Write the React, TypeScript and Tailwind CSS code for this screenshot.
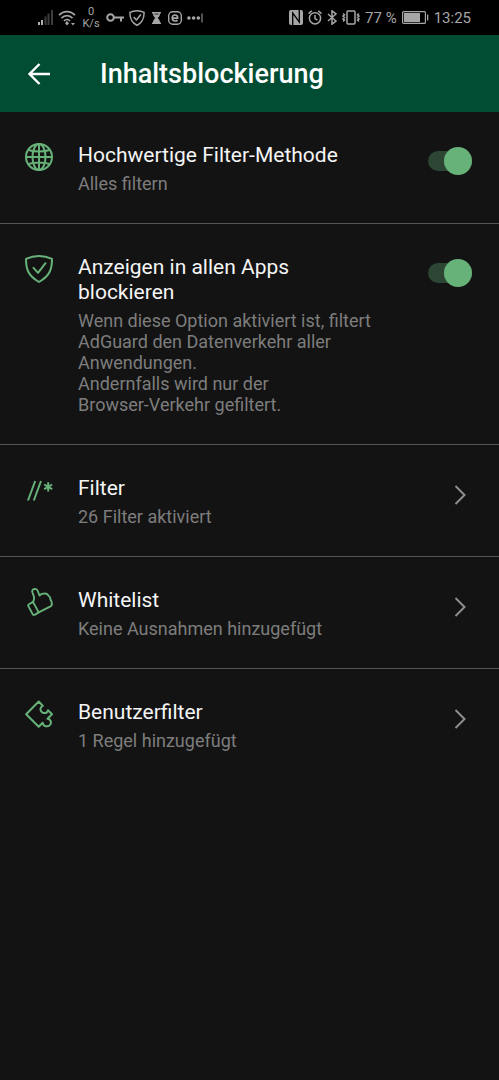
import React, { useState } from 'react';

const GlobeIcon = () => (
  <svg viewBox="0 0 28 28" className="h-7 w-7" fill="none" stroke="currentColor" strokeWidth="2">
    <circle cx="14" cy="14" r="13" />
    <ellipse cx="14" cy="14" rx="6.5" ry="13" />
    <path d="M14 1v26M1 14h26M3.500 7c5.500 2 15.500 2 21 0M3.500 21c5.500-2 15.500-2 21 0" />
  </svg>
);

const ShieldIcon = () => (
  <svg viewBox="0 0 28 28" className="h-7 w-7" fill="none" stroke="currentColor" strokeWidth="2" strokeLinejoin="round" strokeLinecap="round">
    <path d="M14 1C9.500 1 5 2 1 3.800c0 9.500 1.500 16.700 13 23.200 11.500-6.500 13-13.700 13-23.200C23 2 18.500 1 14 1z" />
    <path d="M8.500 12.800l4.500 5 7.500-9.600" />
  </svg>
);

const FilterIcon = () => (
  <svg viewBox="0 0 28 28" className="h-7 w-7" fill="none" stroke="currentColor" strokeWidth="2">
    <path d="M3 24.500L10.200 5M8.800 24.500L16 5" />
    <path d="M23.200 6.200v9.200M19.200 8.500l8 4.600M27.200 8.500l-8 4.600" />
  </svg>
);

const ThumbIcon = () => (
  <svg viewBox="0 0 28 28" className="h-7 w-7" fill="none" stroke="currentColor" strokeWidth="1.900" strokeLinejoin="round" strokeLinecap="round">
    <path d="M4 16.200l4-2.300 5.700 10.500-3.600 2.200c-1 .6-2 .3-2.600-.7L3.500 18.400c-.5-.9-.3-1.700.5-2.200z" />
    <path d="M8 13.900c1.500-2.300 1.300-4.500.4-6.700L7.400 4.300C6.800 2.200 8 1.200 9.500 1c1.600-.2 2.800.5 3.300 2l1.700 4.500c1.200-1.300 2.500-2 4-1.800 2.700-.7 4.200.2 5 2 1.600 1 2.100 2.300 1.900 3.700 1.400 2 1.600 3.500 1.500 5.200-.1.800-.6 1.300-1.400 1.800L13.700 24.400" />
  </svg>
);

const PuzzleIcon = () => (
  <svg viewBox="0 0 28 28" className="h-7 w-7" fill="none" stroke="currentColor" strokeWidth="2" strokeLinejoin="round">
    <path d="M13.700 1.500L1.200 14.200l12.500 12.500 4-4c.2 2.500 2.500 4 4.800 3.600 2.500-.4 4-2.900 3.200-5.200-.5-1.400-1.700-2.300-3.200-2.400l4.500-4.500-4-4c-.6 2-2.300 3.200-4.300 2.800-2.300-.4-3.700-2.700-3-4.900.3-1.100 1-1.800 2-2.300z" />
  </svg>
);

const SignalIcon = () => (
  <svg viewBox="0 0 15 15" className="h-[15px] w-[15px]">
    <path d="M0 12h2v3H0zM3 10h2v5H3z" fill="#b0b0b0" />
    <path d="M6.500 6.500h2V15h-2zM9.500 3.500h2V15h-2zM13 0h2v15h-2z" fill="#3c3c3c" />
  </svg>
);

const WifiIcon = () => (
  <svg viewBox="0 0 18 16" className="h-4 w-[18px]" fill="none" stroke="currentColor" strokeWidth="1.700">
    <path d="M1 5.200C5.600.3 12.400.3 17 5.200M3.500 8.200c3.200-3.400 7.800-3.400 11 0M6 11c1.800-2 4.200-2 6 0" />
    <path d="M9 11l2 2.200-2 2.200-2-2.200z" fill="currentColor" stroke="none" />
    <path d="M13 13h4l-2 2.500z" fill="currentColor" stroke="none" />
  </svg>
);

const KeyIcon = () => (
  <svg viewBox="0 0 18 16" className="h-4 w-[18px]" fill="none" stroke="currentColor" strokeWidth="2">
    <circle cx="4.500" cy="7.500" r="3.300" />
    <path d="M8 7.500h10M15 7.500v4" />
  </svg>
);

const SmallShieldIcon = () => (
  <svg viewBox="0 0 16 16" className="h-4 w-4" fill="none" stroke="currentColor" strokeWidth="1.500" strokeLinejoin="round">
    <path d="M8 .8C5.500.8 3 1.400.9 2.400.9 8 2 12 8 15.400 14 12 15.100 8 15.100 2.400 13 1.400 10.500.8 8 .8z" />
    <path d="M4.700 7l2.700 3 4.500-5.500" />
  </svg>
);

const HourglassIcon = () => (
  <svg viewBox="0 0 13 12" className="h-3 w-[13px]" fill="currentColor">
    <path d="M2 0h9v1.500h-1c0 2-1 3.500-2.500 4.500C9 7 10 8.500 10 10.500h1V12H2v-1.500h1c0-2 1-3.500 2.500-4.500C4 5 3 3.500 3 1.500H2z" />
    <path d="M4.500 2h4" stroke="#000" fill="none" strokeWidth=".8" />
  </svg>
);

const BrowserIcon = () => (
  <svg viewBox="0 0 14 14" className="h-3.5 w-3.5" fill="none" stroke="currentColor">
    <rect x=".7" y=".7" width="12.600" height="12.600" rx="4" strokeWidth="1.400" />
    <path d="M4.300 7.200h5.400C9.700 5.300 8.700 4 7 4S4.200 5.400 4.200 7.100 5.400 10 7.100 10c1 0 1.800-.3 2.300-.9" strokeWidth="1.700" />
  </svg>
);

const DotsIcon = () => (
  <svg viewBox="0 0 16 12" className="h-3 w-4" fill="currentColor">
    <circle cx="1.900" cy="6" r="1.800" />
    <circle cx="6.600" cy="6" r="1.800" />
    <circle cx="11.300" cy="6" r="1.800" />
    <path d="M14.500 1.500h1v9h-1z" />
  </svg>
);

const NfcIcon = () => (
  <svg viewBox="0 0 14 15" className="h-[15px] w-3.5">
    <rect width="14" height="15" rx="2" fill="currentColor" />
    <path d="M3.700 12.500V3l6.600 9V2.500" fill="none" stroke="#000" strokeWidth="1.300" />
    <path d="M3.700 12v3M10.300 0v3" stroke="#000" strokeWidth="1.300" />
  </svg>
);

const AlarmIcon = () => (
  <svg viewBox="0 0 14 15" className="h-[15px] w-3.5" fill="none" stroke="currentColor" strokeWidth="1.500">
    <circle cx="7" cy="8.300" r="5.600" />
    <path d="M7 5v3.600l2.500 1.500M.5 3.600L3.700.9M13.500 3.600L10.300.9" />
  </svg>
);

const BluetoothIcon = () => (
  <svg viewBox="0 0 10 15" className="h-[15px] w-2.5" fill="none" stroke="currentColor" strokeWidth="1.500">
    <path d="M1 4l8 7-4 3.200V.8L9 4l-8 7" />
  </svg>
);

const VibrateIcon = () => (
  <svg viewBox="0 0 18 15" className="h-[15px] w-[18px]" fill="none" stroke="currentColor" strokeWidth="1.500">
    <rect x="5" y="1" width="8" height="13" rx="1" />
    <path d="M1 3.500l1.500 1.300L1 6.200l1.500 1.300L1 8.800l1.500 1.300L1 11.500M17 3.500l-1.500 1.300L17 6.200l-1.500 1.300L17 8.800l-1.500 1.300 1.500 1.400" />
  </svg>
);

const BatteryIcon = () => (
  <svg viewBox="0 0 27 13" className="h-[13px] w-[27px]">
    <rect x=".6" y=".6" width="22.800" height="11.800" rx="1" fill="none" stroke="currentColor" strokeWidth="1.200" />
    <rect x="2" y="2" width="16" height="9" fill="currentColor" />
    <path d="M25 3.500h1.300v6H25z" fill="currentColor" />
  </svg>
);

const StatusBar = () => (
  <div className="flex h-[35px] items-center justify-between bg-black pr-7 pl-[38px] text-[#a6a6a6]">
    <div className="flex items-center gap-[5px]">
      <SignalIcon />
      <WifiIcon />
      <div className="w-5 text-center text-[11px] leading-3">
        <div>0</div>
        <div>K/s</div>
      </div>
      <KeyIcon />
      <SmallShieldIcon />
      <HourglassIcon />
      <BrowserIcon />
      <DotsIcon />
    </div>
    <div className="flex items-center gap-[5px] text-[15px] leading-5">
      <NfcIcon />
      <AlarmIcon />
      <BluetoothIcon />
      <VibrateIcon />
      <span>77 %</span>
      <BatteryIcon />
      <span>13:25</span>
    </div>
  </div>
);

interface RowContentProps {
  icon: React.ReactNode;
  title: string;
  children: React.ReactNode;
}

const rowClass = 'relative flex w-full cursor-pointer items-start border-[#555] pt-[31px] pr-[27px] pb-[29px] pl-[25px] text-left';

const RowContent: React.FC<RowContentProps> = ({ icon, title, children }) => (
  <>
    <span className="w-[53px] shrink-0 text-[#67b279]">{icon}</span>
    <span className="flex min-w-0 flex-1 flex-col gap-[5px] pr-10">
      <span className="text-[21px] leading-[25px] text-[#f5f5f5]">{title}</span>
      <span className="text-lg leading-[21px] text-[#7d7d7d]">{children}</span>
    </span>
  </>
);

const ToggleRow: React.FC<RowContentProps> = ({ icon, title, children }) => {
  const [checked, setChecked] = useState(true);

  return (
    <label className={`${rowClass} border-b`}>
      <RowContent icon={icon} title={title}>{children}</RowContent>
      <input
        type="checkbox"
        className="peer sr-only"
        checked={checked}
        onChange={e => setChecked(e.target.checked)}
      />
      <span className="mt-2 flex h-5 w-11 shrink-0 items-center rounded-full bg-[#444] peer-checked:justify-end peer-checked:bg-[#2c4633]">
        <span className={`h-7 w-7 shrink-0 rounded-full ${checked ? 'bg-[#67b279]' : 'bg-[#9a9a9a]'}`} />
      </span>
    </label>
  );
};

const LinkRow: React.FC<RowContentProps & { last?: boolean }> = ({ icon, title, children, last }) => (
  <button type="button" className={`${rowClass} ${last ? '' : 'border-b'}`}>
    <RowContent icon={icon} title={title}>{children}</RowContent>
    <svg viewBox="0 0 28 28" className="mt-1 h-7 w-7 shrink-0 text-[#8f8f8f]" fill="none" stroke="currentColor" strokeWidth="2">
      <path d="M11.500 6l9 9-9 9" />
    </svg>
  </button>
);

export default function App() {
  return (
    <div className="min-h-screen bg-[#131313] font-['Roboto','Noto_Sans',sans-serif]">
      <StatusBar />
      <header className="flex h-[77px] items-center bg-[#004d33] pl-[27px] text-white">
        <button type="button" aria-label="Zurück" className="w-[73px] cursor-pointer">
          <svg viewBox="0 0 24 24" className="h-6 w-6" fill="none" stroke="currentColor" strokeWidth="2.400">
            <path d="M23 12H3M12.500 2L2.500 12l10 10" />
          </svg>
        </button>
        <h1 className="pt-0.5 text-[27px] font-medium">Inhaltsblockierung</h1>
      </header>
      <main>
        <ToggleRow icon={<GlobeIcon />} title="Hochwertige Filter-Methode">
          Alles filtern
        </ToggleRow>
        <ToggleRow icon={<ShieldIcon />} title="Anzeigen in allen Apps blockieren">
          Wenn diese Option aktiviert ist, filtert AdGuard den Datenverkehr aller Anwendungen.
          <br />
          Andernfalls wird nur der <span className="whitespace-nowrap">Browser-Verkehr</span> gefiltert.
        </ToggleRow>
        <LinkRow icon={<FilterIcon />} title="Filter">
          26 Filter aktiviert
        </LinkRow>
        <LinkRow icon={<ThumbIcon />} title="Whitelist">
          Keine Ausnahmen hinzugefügt
        </LinkRow>
        <LinkRow icon={<PuzzleIcon />} title="Benutzerfilter" last>
          1 Regel hinzugefügt
        </LinkRow>
      </main>
    </div>
  );
}
